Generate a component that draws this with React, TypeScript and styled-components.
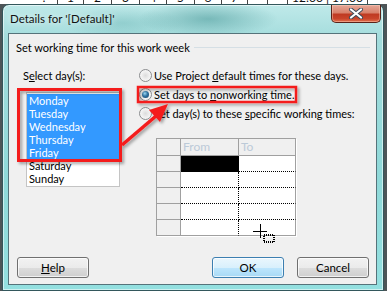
import styled, { createGlobalStyle } from 'styled-components';

const GlobalStyle = createGlobalStyle`
  html, body {
    margin: 0;
    padding: 0;
  }
  body {
    width: 387px;
    height: 291px;
    overflow: hidden;
    background: #4d5558;
    font-family: Lato, "Noto Sans", "Liberation Sans", sans-serif;
    font-size: 11px;
    color: #000;
  }
`;

const Screen = styled.div`
  position: relative;
  width: 387px;
  height: 291px;
  overflow: hidden;
  display: flex;
  flex-direction: column;
`;

const Ruler = styled.div`
  flex: none;
  height: 4px;
  background: #fff;
  display: flex;
  align-items: flex-end;
  overflow: hidden;
  padding-left: 31px;
`;

const RulerCell = styled.div<{ $w: number }>`
  flex: none;
  width: ${(p) => p.$w}px;
  height: 13px;
  line-height: 13px;
  box-sizing: border-box;
  border-right: 1px solid #444;
  text-align: center;
  font-size: 12px;
  color: #111;
`;

const Window = styled.div`
  flex: none;
  margin-left: 2px;
  width: 382px;
  height: 287px;
  box-sizing: border-box;
  border: 1px solid #33575c;
  border-radius: 7px 7px 0 0;
  background:
    radial-gradient(ellipse 70px 18px at 205px 14px, rgba(70, 150, 150, 0.55), transparent),
    radial-gradient(ellipse 60px 16px at 120px 18px, rgba(90, 170, 170, 0.35), transparent),
    linear-gradient(180deg, #bfe9e9 0%, #a3dcdc 12%, #8fd9d9 60%, #93e0e0 100%);
  box-shadow: inset 0 0 0 1px rgba(255, 255, 255, 0.55);
  display: flex;
  flex-direction: column;
`;

const TitleBar = styled.div`
  flex: none;
  height: 28px;
  display: flex;
  justify-content: space-between;
  align-items: flex-start;
`;

const Title = styled.span`
  padding-left: 7px;
  line-height: 27px;
  font-size: 11.5px;
  color: #111;
  text-shadow: 0 0 6px rgba(255, 255, 255, 0.9);
`;

const CloseButton = styled.div`
  width: 50px;
  height: 18px;
  margin-right: 2px;
  box-sizing: border-box;
  border: 1px solid #5a2218;
  border-top: none;
  border-radius: 0 0 5px 5px;
  background: linear-gradient(180deg, #e6a898 0%, #d8826c 45%, #bf3a22 55%, #c9452b 80%, #e2704c 100%);
  box-shadow: inset 0 0 0 1px rgba(255, 210, 190, 0.45);
  display: grid;
  place-items: center;
`;

const Client = styled.div`
  flex: 1;
  margin: 0 6px 5px 5px;
  border: 1px solid #55737a;
  background: #f0f0f0;
  display: flex;
  flex-direction: column;
  white-space: nowrap;
`;

const GroupHeader = styled.div`
  display: flex;
  align-items: center;
  gap: 4px;
  padding: 6px 6px 0 7px;
  line-height: 15px;

  &::after {
    content: '';
    flex: 1;
    height: 1px;
    background: #d5dfe5;
  }
`;

const Body = styled.div`
  display: flex;
  margin-top: 11px;
`;

const LeftColumn = styled.div`
  flex: none;
  width: 130px;
  box-sizing: border-box;
  padding-left: 14px;
`;

const FieldLabel = styled.div`
  line-height: 19px;
`;

const ListBox = styled.ul`
  margin: 7px 0 0 3px;
  padding: 1px 0 0;
  list-style: none;
  width: 94px;
  height: 95px;
  box-sizing: border-box;
  border: 1px solid #c4c4c4;
  background: #fff;
`;

const DayItem = styled.li<{ $selected?: boolean }>`
  height: 13px;
  line-height: 13px;
  padding-left: 2px;
  background: ${(p) => (p.$selected ? '#3399ff' : 'transparent')};
  color: ${(p) => (p.$selected ? '#fff' : '#000')};
`;

const RightColumn = styled.div`
  display: flex;
  flex-direction: column;
`;

const Option = styled.label`
  display: flex;
  align-items: center;
  gap: 2px;
  height: 19px;
`;

const Radio = styled.span<{ $checked?: boolean }>`
  flex: none;
  width: 13px;
  height: 13px;
  box-sizing: border-box;
  border-radius: 50%;
  border: 1px solid #8b8d8f;
  background: radial-gradient(circle at 50% 50%, #dcdcdc 0%, #f2f2f2 55%, #fbfbfb 100%);
  display: grid;
  place-items: center;

  &::after {
    content: '';
    display: ${(p) => (p.$checked ? 'block' : 'none')};
    width: 7px;
    height: 7px;
    border-radius: 50%;
    background: radial-gradient(circle at 40% 35%, #9ad8f4 0%, #2f73a2 45%, #153f63 100%);
  }
`;

const TimeGrid = styled.div`
  margin: 15px 0 0 17px;
  display: grid;
  grid-template-columns: 24px 58px 57px;
  grid-template-rows: 17px repeat(5, 16px);
  width: 140px;
  box-sizing: border-box;
  border-left: 1px solid #a0a0a0;
  border-top: 1px solid #a0a0a0;
  box-shadow: 1px 1px 0 #fff;
`;

const HeadCell = styled.div`
  box-sizing: border-box;
  background: #f0f0f0;
  border-right: 1px solid #a0a0a0;
  border-bottom: 1px solid #a0a0a0;
  color: #bccad8;
  font-size: 12px;
  padding-left: 2px;
  line-height: 16px;
`;

const RowHead = styled.div`
  box-sizing: border-box;
  background: #f0f0f0;
  border-right: 1px solid #a0a0a0;
  border-bottom: 1px solid #a0a0a0;
`;

const TimeCell = styled.div<{ $lastCol?: boolean; $lastRow?: boolean; $active?: boolean }>`
  box-sizing: border-box;
  background: ${(p) => (p.$active ? '#000' : '#fff')};
  border-right: 1px ${(p) => (p.$lastCol ? 'solid #a0a0a0' : 'dotted #000')};
  border-bottom: 1px ${(p) => (p.$lastRow ? 'solid #a0a0a0' : 'dotted #000')};
`;

const Footer = styled.div`
  margin-top: auto;
  display: flex;
  gap: 13px;
  padding: 0 7px 6px 8px;
`;

const Button = styled.button<{ $default?: boolean }>`
  width: 72px;
  height: 21px;
  padding: 0;
  box-sizing: border-box;
  font-family: inherit;
  font-size: 11.5px;
  color: #000;
  border-radius: 3px;
  border: 1px solid ${(p) => (p.$default ? '#3c7fb1' : '#707070')};
  background: ${(p) =>
    p.$default
      ? 'linear-gradient(180deg, #eaf6fd 0%, #d9f0fc 50%, #bee6fd 51%, #a7d9f5 100%)'
      : 'linear-gradient(180deg, #f2f2f2 0%, #ebebeb 50%, #dddddd 51%, #cfcfcf 100%)'};
  box-shadow: inset 0 0 0 1px rgba(255, 255, 255, 0.7);
  line-height: 19px;

  &:first-child {
    margin-right: auto;
  }
`;

const Annotations = styled.svg`
  position: absolute;
  left: 0;
  top: 0;
  width: 387px;
  height: 291px;
  pointer-events: none;
`;

const days = ['Monday', 'Tuesday', 'Wednesday', 'Thursday', 'Friday', 'Saturday', 'Sunday'];
const rulerCells = [26, 28, 28, 27, 28, 27, 26, 20, 20];

export default function App() {
  return (
    <>
      <GlobalStyle />
      <Screen>
        <Ruler>
          <RulerCell $w={27}>:</RulerCell>
          {rulerCells.map((w, i) => (
            <RulerCell key={i} $w={w}>
              {i < 7 ? i + 1 : ''}
            </RulerCell>
          ))}
          <RulerCell $w={80}>12:00 | 17:00</RulerCell>
        </Ruler>
        <Window>
          <TitleBar>
            <Title>Details for '[Default]'</Title>
            <CloseButton>
              <svg width="16" height="11" viewBox="0 0 16 11">
                <path d="M3 1.5 L13 9.5 M13 1.5 L3 9.5" stroke="#3b4a5a" strokeWidth="4" strokeLinecap="round" />
                <path d="M3 1.5 L13 9.5 M13 1.5 L3 9.5" stroke="#fff" strokeWidth="2.2" strokeLinecap="round" />
              </svg>
            </CloseButton>
          </TitleBar>
          <Client>
            <GroupHeader>Set working time for this work week</GroupHeader>
            <Body>
              <LeftColumn>
                <FieldLabel>
                  S<u>e</u>lect day(s):
                </FieldLabel>
                <ListBox>
                  {days.map((d, i) => (
                    <DayItem key={d} $selected={i < 5}>
                      {d}
                    </DayItem>
                  ))}
                </ListBox>
              </LeftColumn>
              <RightColumn>
                <Option>
                  <Radio />
                  <span>
                    Use Project <u>d</u>efault times for these days.
                  </span>
                </Option>
                <Option>
                  <Radio $checked />
                  <span>
                    Set days to <u>n</u>onworking time.
                  </span>
                </Option>
                <Option>
                  <Radio />
                  <span>
                    Set day(s) to these <u>s</u>pecific working times:
                  </span>
                </Option>
                <TimeGrid>
                  <HeadCell />
                  <HeadCell>From</HeadCell>
                  <HeadCell>To</HeadCell>
                  {[0, 1, 2, 3, 4].map((r) => [
                    <RowHead key={`h${r}`} />,
                    <TimeCell key={`f${r}`} $active={r === 0} $lastRow={r === 4} />,
                    <TimeCell key={`t${r}`} $lastCol $lastRow={r === 4} />,
                  ])}
                </TimeGrid>
              </RightColumn>
            </Body>
            <Footer>
              <Button>
                <u>H</u>elp
              </Button>
              <Button $default>OK</Button>
              <Button>Cancel</Button>
            </Footer>
          </Client>
        </Window>
        <Annotations viewBox="0 0 387 291">
          <defs>
            <filter id="shadow" x="-20%" y="-20%" width="140%" height="140%">
              <feDropShadow dx="2" dy="2" stdDeviation="1.5" floodColor="#000" floodOpacity="0.35" />
            </filter>
          </defs>
          <g filter="url(#shadow)">
            <rect x="18.5" y="89.5" width="102" height="71" fill="none" stroke="#f41c1c" strokeWidth="3" />
            <rect x="138" y="87" width="158" height="15" fill="none" stroke="#f41c1c" strokeWidth="2.5" />
            <path d="M122 145 L156 116" stroke="#f41c1c" strokeWidth="3.5" />
            <polygon points="168,104 160,122 149,110" fill="#f41c1c" />
          </g>
          <g stroke="#000" strokeWidth="1" shapeRendering="crispEdges">
            <path d="M253 231.5 H267 M260.5 224 V238" />
            <rect x="263.5" y="234.5" width="10" height="7" fill="none" strokeDasharray="1 1" strokeWidth="2" />
          </g>
        </Annotations>
      </Screen>
    </>
  );
}
